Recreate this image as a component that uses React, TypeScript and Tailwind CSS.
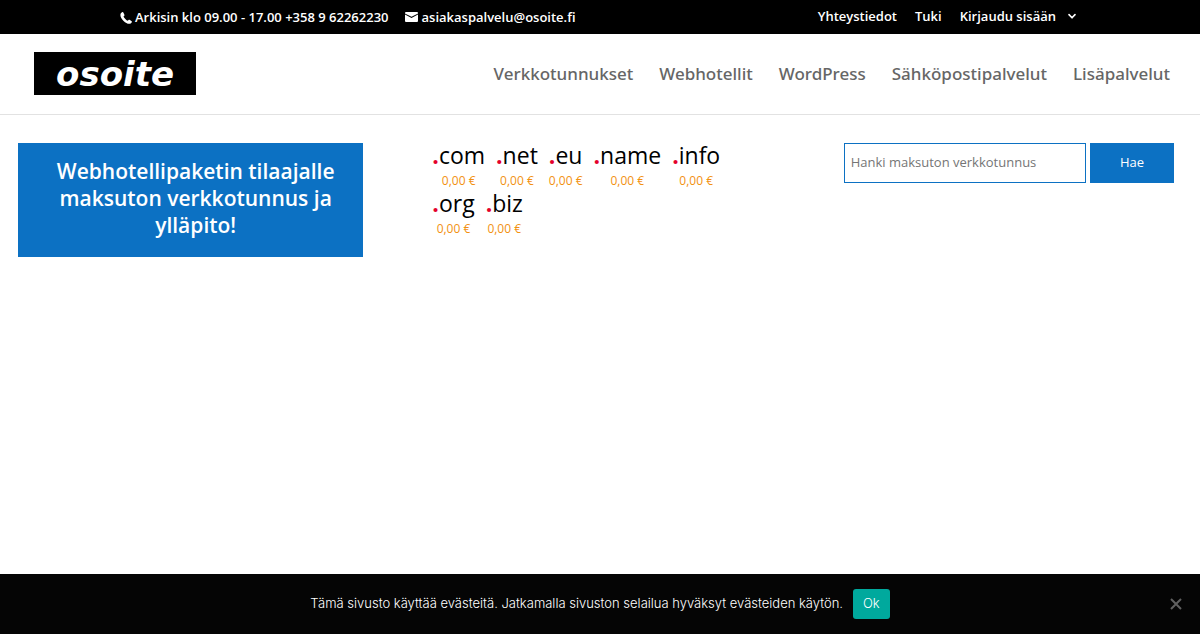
import { useState } from "react";
import type { FormEvent } from "react";

const topLinks = [
  { label: "Yhteystiedot", href: "#yhteystiedot" },
  { label: "Tuki", href: "#tuki" },
];

const mainLinks = [
  { label: "Verkkotunnukset", href: "#verkkotunnukset" },
  { label: "Webhotellit", href: "#webhotellit" },
  { label: "WordPress", href: "#wordpress" },
  { label: "Sähköpostipalvelut", href: "#sahkoposti" },
  { label: "Lisäpalvelut", href: "#lisapalvelut" },
];

const domains = ["com", "net", "eu", "name", "info", "org", "biz"];

function PhoneIcon() {
  return (
    <svg className="h-[13px] w-3" viewBox="0 0 12 13" fill="currentColor" aria-hidden="true">
      <path d="M2.2 1.200 1 2C-.5 4 .9 7.300 3.600 9.900 6.100 12.300 9 13.600 11 12.200L11.800 11.300C12.100 10.900 12 10.500 11.600 10.200L9.600 8.800C9.200 8.500 8.800 8.600 8.500 9L7.800 9.800C6.400 9.300 4.100 7 3.500 5.500L4.200 4.800C4.600 4.500 4.600 4.100 4.400 3.700L3.300 1.500C3 1 2.600.9 2.200 1.200Z" />
    </svg>
  );
}

function MailIcon() {
  return (
    <svg className="h-[11px] w-[13px]" viewBox="0 0 13 11" fill="currentColor" aria-hidden="true">
      <path d="M1 0H12Q13 0 13 1V1.500L6.500 4.800 0 1.500V1Q0 0 1 0ZM0 2.600 6.500 5.900 13 2.600V9Q13 10 12 10H1Q0 10 0 9Z" />
    </svg>
  );
}

function TopBar() {
  return (
    <div className="bg-black text-[13px] leading-[18px] font-semibold text-white">
      <div className="mx-auto flex w-4/5 items-start justify-between pt-2 pb-2">
        <div className="flex gap-4">
          <span className="flex items-center gap-[3px]">
            <PhoneIcon />
            Arkisin klo 09.00 - 17.00 +358 9 62262230
          </span>
          <a href="mailto:asiakaspalvelu@osoite.fi" className="flex items-center gap-1">
            <MailIcon />
            asiakaspalvelu@osoite.fi
          </a>
        </div>
        <nav className="flex gap-[18px] leading-4" aria-label="Asiakasvalikko">
          {topLinks.map((link) => (
            <a key={link.label} href={link.href}>
              {link.label}
            </a>
          ))}
          <a href="#kirjaudu" className="flex items-center gap-3">
            Kirjaudu sisään
            <svg
              className="mr-1 h-[6px] w-2"
              viewBox="0 0 8 6"
              fill="none"
              stroke="currentColor"
              strokeWidth="1.6"
              strokeLinecap="round"
              strokeLinejoin="round"
              aria-hidden="true"
            >
              <path d="M1 1.600 4 4.800 7 1.600" />
            </svg>
          </a>
        </nav>
      </div>
    </div>
  );
}

function Header() {
  return (
    <header className="flex items-center justify-between border-b border-[#e2e2e2] px-[30px] pt-[18px] pb-[19px]">
      <a
        href="#etusivu"
        className="ml-1 flex h-[43px] w-[162px] items-center justify-center bg-black font-['DejaVu_Sans',sans-serif] text-[34px] leading-none font-bold text-white italic"
      >
        osoite
      </a>
      <nav
        className="flex gap-[26px] font-['Noto_Sans',sans-serif] text-[17px] font-medium text-[#666]"
        aria-label="Päävalikko"
      >
        {mainLinks.map((link) => (
          <a key={link.label} href={link.href}>
            {link.label}
          </a>
        ))}
      </nav>
    </header>
  );
}

function DomainSearch() {
  const [query, setQuery] = useState("");

  const handleSubmit = (e: FormEvent) => {
    e.preventDefault();
  };

  return (
    <form onSubmit={handleSubmit} className="flex h-10 gap-1 pr-2 pl-[7px] text-[13px]">
      <input
        type="text"
        aria-label="Verkkotunnus"
        placeholder="Hanki maksuton verkkotunnus"
        value={query}
        onChange={(e) => setQuery(e.target.value)}
        className="min-w-0 flex-1 border border-[#0c71c3] px-1.5 text-[#4e4e4e] placeholder:text-[#757575]"
      />
      <button type="submit" className="w-[84px] bg-[#0c71c3] text-white">
        Hae
      </button>
    </form>
  );
}

function CookieNotice() {
  const [open, setOpen] = useState(true);

  if (!open) return null;

  return (
    <div
      role="dialog"
      aria-label="Evästeilmoitus"
      className="fixed inset-x-0 bottom-0 flex h-[60px] items-center justify-center gap-2.5 bg-[#050505] font-['Inter',sans-serif] text-[13px] font-light text-white"
    >
      <span>
        Tämä sivusto käyttää evästeitä. Jatkamalla sivuston selailua hyväksyt evästeiden käytön.
      </span>
      <button
        onClick={() => setOpen(false)}
        className="h-[30px] rounded-[3px] bg-[#00a99d] px-2.5"
      >
        Ok
      </button>
      <button
        aria-label="Sulje"
        onClick={() => setOpen(false)}
        className="absolute right-4 text-[#606060]"
      >
        <svg
          className="h-4 w-4"
          viewBox="0 0 16 16"
          fill="none"
          stroke="currentColor"
          strokeWidth="2"
          aria-hidden="true"
        >
          <path d="M3 3 13 13M13 3 3 13" />
        </svg>
      </button>
    </div>
  );
}

export default function App() {
  return (
    <div className="min-h-screen bg-white font-['Open_Sans',sans-serif]">
      <TopBar />
      <Header />
      <main className="grid grid-cols-3 items-start gap-16 px-[18px] pt-7">
        <h2 className="bg-[#0c71c3] pt-[15px] pr-5 pb-[18px] pl-[30px] text-center text-[21px] leading-[27px] font-semibold text-white">
          Webhotellipaketin tilaajalle maksuton verkkotunnus ja ylläpito!
        </h2>
        <ul className="flex flex-wrap gap-x-px">
          {domains.map((name) => (
            <li key={name} className="flex h-12 flex-col items-center px-[5px]">
              <span className="text-[23px] leading-6 text-black">
                <span className="font-bold text-[#e4002b]">.</span>
                {name}
              </span>
              <span className="mt-1 text-xs leading-5 text-[#f29111]">0,00 €</span>
            </li>
          ))}
        </ul>
        <DomainSearch />
      </main>
      <CookieNotice />
    </div>
  );
}
